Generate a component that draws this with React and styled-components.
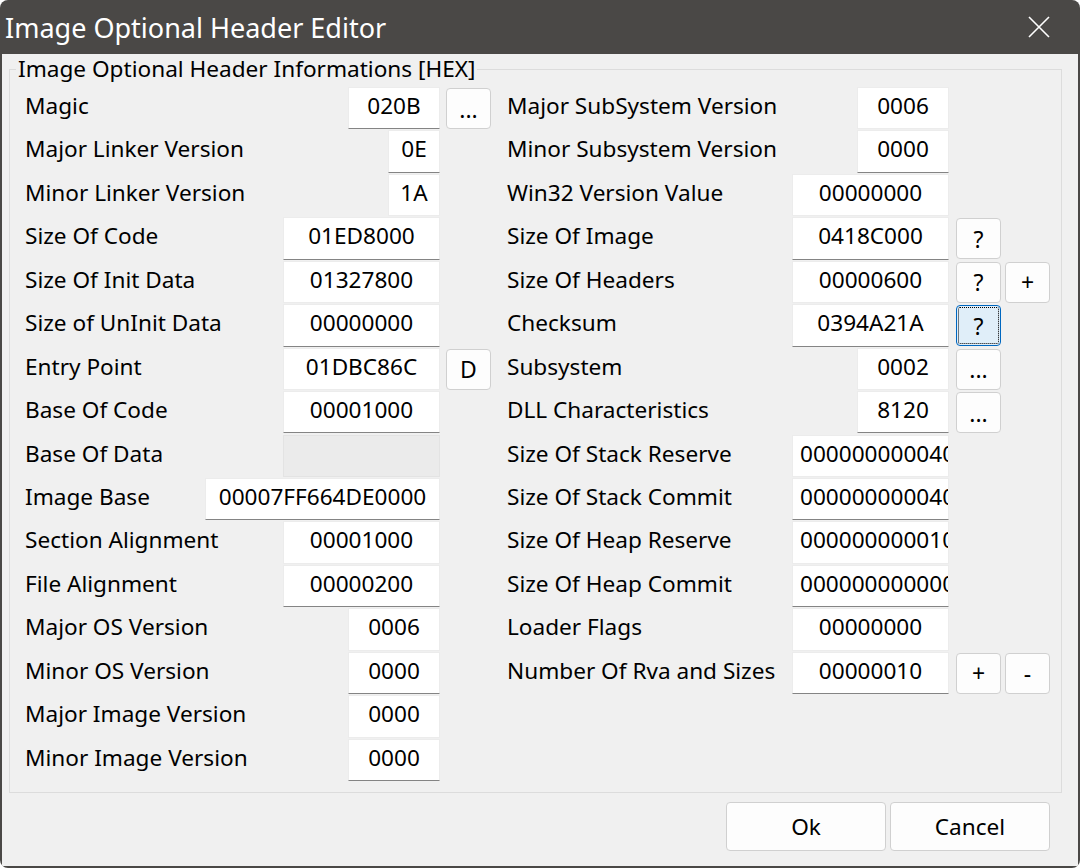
import React from 'react';
import styled, { createGlobalStyle } from 'styled-components';

const GlobalStyle = createGlobalStyle`
  html, body {
    margin: 0;
    padding: 0;
    background: #ffffff;
  }
  body {
    font-family: "Noto Sans", "Open Sans", sans-serif;
  }
`;

const Window = styled.div`
  width: 1080px;
  height: 868px;
  box-sizing: border-box;
  background: #4a4846;
  border-radius: 8px;
  overflow: hidden;
  display: flex;
  flex-direction: column;
  padding: 0 2px 2px 2px;
`;

const TitleBar = styled.div`
  height: 54px;
  flex: none;
  display: flex;
  align-items: center;
  justify-content: space-between;
  color: #ffffff;
  font-size: 27px;
  padding-left: 3px;
  padding-right: 28px;
`;

const CloseButton = styled.div`
  width: 22px;
  height: 22px;
  display: flex;
  align-items: center;
  justify-content: center;
`;

const Body = styled.div`
  flex: 1;
  background: #f0f0f0;
  display: flex;
  flex-direction: column;
  padding: 2px 16px 0 7px;
`;

const Group = styled.fieldset`
  margin: 0;
  padding: 0 11px 10px 15px;
  border: 1px solid #dcdcdc;
  min-width: 0;
`;

const Legend = styled.legend`
  font-size: 22.6px;
  line-height: 26px;
  padding: 0 2px;
  margin-left: -9px;
  color: #000;
`;

const Columns = styled.div`
  display: flex;
  gap: 16px;
  padding-top: 5px;
`;

const Column = styled.div`
  width: ${(p) => p.$width}px;
  display: flex;
  flex-direction: column;
`;

const Row = styled.div`
  height: 43.44px;
  display: flex;
  align-items: flex-start;
`;

const Label = styled.div`
  flex: 1;
  font-size: 22.6px;
  line-height: 38px;
  color: #000;
  white-space: nowrap;
`;

const Field = styled.div`
  width: ${(p) => p.$width}px;
  height: 42.4px;
  box-sizing: border-box;
  background: ${(p) => (p.$disabled ? '#ebebeb' : '#ffffff')};
  border: 1px solid ${(p) => (p.$disabled ? '#e3e3e3' : '#ececec')};
  border-bottom: 1px solid ${(p) => (p.$line ? '#848484' : p.$disabled ? '#e3e3e3' : '#ececec')};
  font-size: 22.6px;
  line-height: 36px;
  text-align: center;
  white-space: nowrap;
  overflow: hidden;
  padding: 0 7px;
  color: #000;
`;

const ButtonSlot = styled.div`
  width: ${(p) => p.$width}px;
  margin-left: ${(p) => p.$gap}px;
  display: flex;
  gap: 4px;
  flex: none;
`;

const SmallButton = styled.div`
  width: 45px;
  height: 41px;
  margin-top: 1px;
  box-sizing: border-box;
  background: ${(p) => (p.$focused ? '#e0eef9' : '#fdfdfd')};
  border: 1px solid ${(p) => (p.$focused ? '#0067c0' : '#d0d0d0')};
  border-radius: 4px;
  display: flex;
  align-items: center;
  justify-content: center;
  font-size: 23px;
  color: #000;
  position: relative;
  &::after {
    content: '';
    display: ${(p) => (p.$focused ? 'block' : 'none')};
    position: absolute;
    inset: 1px;
    border: 1px dotted #000;
    border-radius: 2px;
  }
`;

const Footer = styled.div`
  display: flex;
  justify-content: flex-end;
  gap: 4px;
  padding-top: 9px;
  margin-right: 12px;
`;

const DialogButton = styled.div`
  width: 160px;
  height: 49px;
  box-sizing: border-box;
  background: #fdfdfd;
  border: 1px solid #d0d0d0;
  border-radius: 4px;
  display: flex;
  align-items: center;
  justify-content: center;
  font-size: 22.6px;
  color: #000;
`;

const leftRows = [
  { label: 'Magic', value: '020B', w: 92, line: true, buttons: ['...'] },
  { label: 'Major Linker Version', value: '0E', w: 52, line: true },
  { label: 'Minor Linker Version', value: '1A', w: 52 },
  { label: 'Size Of Code', value: '01ED8000', w: 157, line: true },
  { label: 'Size Of Init Data', value: '01327800', w: 157 },
  { label: 'Size of UnInit Data', value: '00000000', w: 157, line: true },
  { label: 'Entry Point', value: '01DBC86C', w: 157, buttons: ['D'] },
  { label: 'Base Of Code', value: '00001000', w: 157, line: true },
  { label: 'Base Of Data', value: '', w: 157, disabled: true },
  { label: 'Image Base', value: '00007FF664DE0000', w: 235, line: true },
  { label: 'Section Alignment', value: '00001000', w: 157 },
  { label: 'File Alignment', value: '00000200', w: 157, line: true },
  { label: 'Major OS Version', value: '0006', w: 92 },
  { label: 'Minor OS Version', value: '0000', w: 92, line: true },
  { label: 'Major Image Version', value: '0000', w: 92 },
  { label: 'Minor Image Version', value: '0000', w: 92, line: true },
];

const rightRows = [
  { label: 'Major SubSystem Version', value: '0006', w: 92 },
  { label: 'Minor Subsystem Version', value: '0000', w: 92, line: true },
  { label: 'Win32 Version Value', value: '00000000', w: 157 },
  { label: 'Size Of Image', value: '0418C000', w: 157, line: true, buttons: ['?'] },
  { label: 'Size Of Headers', value: '00000600', w: 157, buttons: ['?', '+'] },
  { label: 'Checksum', value: '0394A21A', w: 157, line: true, buttons: ['?'], focused: 0 },
  { label: 'Subsystem', value: '0002', w: 92, buttons: ['...'] },
  { label: 'DLL Characteristics', value: '8120', w: 92, line: true, buttons: ['...'] },
  { label: 'Size Of Stack Reserve', value: '0000000000400000', w: 157 },
  { label: 'Size Of Stack Commit', value: '0000000000400000', w: 157, line: true },
  { label: 'Size Of Heap Reserve', value: '0000000000100000', w: 157 },
  { label: 'Size Of Heap Commit', value: '0000000000001000', w: 157, line: true },
  { label: 'Loader Flags', value: '00000000', w: 157 },
  { label: 'Number Of Rva and Sizes', value: '00000010', w: 157, line: true, buttons: ['+', '-'] },
];

const FieldRow = ({ row, slotWidth, slotGap }) => (
  <Row>
    <Label>{row.label}</Label>
    <Field $width={row.w} $line={row.line} $disabled={row.disabled}>
      {row.value}
    </Field>
    <ButtonSlot $width={slotWidth} $gap={slotGap}>
      {(row.buttons || []).map((b, i) => (
        <SmallButton key={i} $focused={row.focused === i}>
          {b}
        </SmallButton>
      ))}
    </ButtonSlot>
  </Row>
);

const App = () => (
  <>
    <GlobalStyle />
    <Window>
      <TitleBar>
        <span>Image Optional Header Editor</span>
        <CloseButton>
          <svg width="22" height="22" viewBox="0 0 22 22">
            <path d="M1 1 L21 21 M21 1 L1 21" stroke="#ffffff" strokeWidth="1.6" fill="none" />
          </svg>
        </CloseButton>
      </TitleBar>
      <Body>
        <Group>
          <Legend>Image Optional Header Informations [HEX]</Legend>
          <Columns>
            <Column $width={466}>
              {leftRows.map((r) => (
                <FieldRow key={r.label} row={r} slotWidth={45} slotGap={6} />
              ))}
            </Column>
            <Column $width={543}>
              {rightRows.map((r) => (
                <FieldRow key={r.label} row={r} slotWidth={94} slotGap={7} />
              ))}
            </Column>
          </Columns>
        </Group>
        <Footer>
          <DialogButton>Ok</DialogButton>
          <DialogButton>Cancel</DialogButton>
        </Footer>
      </Body>
    </Window>
  </>
);

export default App;
